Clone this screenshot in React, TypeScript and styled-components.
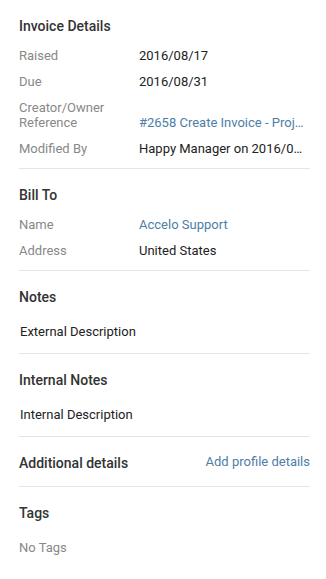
import React from "react";
import styled, { createGlobalStyle } from "styled-components";

const Global = createGlobalStyle`
  html, body { margin: 0; padding: 0; background: #fff; }
  body { font-family: Roboto, "Noto Sans", "Liberation Sans", sans-serif; -webkit-font-smoothing: antialiased; }
`;

const Panel = styled.div`
  width: 326px;
  box-sizing: border-box;
  padding: 0 16px 0 19px;
`;

const Section = styled.section<{ $last?: boolean; $pb?: number }>`
  padding: 16px 0 ${(p) => (p.$pb ?? 12)}px;
  border-bottom: ${(p) => (p.$last ? "none" : "1px solid #e5e5e5")};
  display: flex;
  flex-direction: column;
`;

const HeaderRow = styled.div`
  display: flex;
  align-items: center;
  justify-content: space-between;
`;

const Heading = styled.h2`
  margin: 0;
  font-size: 14px;
  line-height: 20px;
  font-weight: 500;
  color: #333;
`;

const HeaderLink = styled.a`
  font-size: 13px;
  line-height: 20px;
  color: #4e7ea6;
  text-decoration: none;
  margin-top: -2px;
`;

const Rows = styled.div`
  display: flex;
  flex-direction: column;
  gap: 11px;
  margin-top: 12px;
`;

const Row = styled.div`
  display: grid;
  grid-template-columns: 120px 1fr;
  align-items: end;
  font-size: 13px;
  line-height: 15px;
`;

const Label = styled.div`
  color: #888;
  width: 80px;
`;

const Value = styled.div<{ $link?: boolean }>`
  color: ${(p) => (p.$link ? "#4e7ea6" : "#222")};
  white-space: nowrap;
  overflow: hidden;
  text-overflow: ellipsis;
  min-width: 0;
  padding-right: 2px;
`;

const Text = styled.p<{ $muted?: boolean }>`
  margin: 17px 0 0;
  font-size: 13px;
  line-height: 15px;
  color: ${(p) => (p.$muted ? "#888" : "#222")};
  padding-left: ${(p) => (p.$muted ? 0 : 1)}px;
`;

type Field = { label: string; value: string; link?: boolean };

const invoice: Field[] = [
  { label: "Raised", value: "2016/08/17" },
  { label: "Due", value: "2016/08/31" },
  { label: "Creator/Owner Reference", value: "#2658 Create Invoice - Project", link: true },
  { label: "Modified By", value: "Happy Manager on 2016/08/17" },
];

const billTo: Field[] = [
  { label: "Name", value: "Accelo Support", link: true },
  { label: "Address", value: "United States" },
];

const FieldList = ({ fields }: { fields: Field[] }) => (
  <Rows>
    {fields.map((f) => (
      <Row key={f.label}>
        <Label>{f.label}</Label>
        <Value $link={f.link}>{f.value}</Value>
      </Row>
    ))}
  </Rows>
);

export default function App() {
  return (
    <>
      <Global />
      <Panel>
        <Section>
          <Heading>Invoice Details</Heading>
          <FieldList fields={invoice} />
        </Section>
        <Section>
          <Heading>Bill To</Heading>
          <FieldList fields={billTo} />
        </Section>
        <Section $pb={14}>
          <Heading>Notes</Heading>
          <Text>External Description</Text>
        </Section>
        <Section $pb={14}>
          <Heading>Internal Notes</Heading>
          <Text>Internal Description</Text>
        </Section>
        <Section $pb={13}>
          <HeaderRow>
            <Heading>Additional details</Heading>
            <HeaderLink href="#">Add profile details</HeaderLink>
          </HeaderRow>
        </Section>
        <Section $last>
          <Heading>Tags</Heading>
          <Text $muted>No Tags</Text>
        </Section>
      </Panel>
    </>
  );
}
